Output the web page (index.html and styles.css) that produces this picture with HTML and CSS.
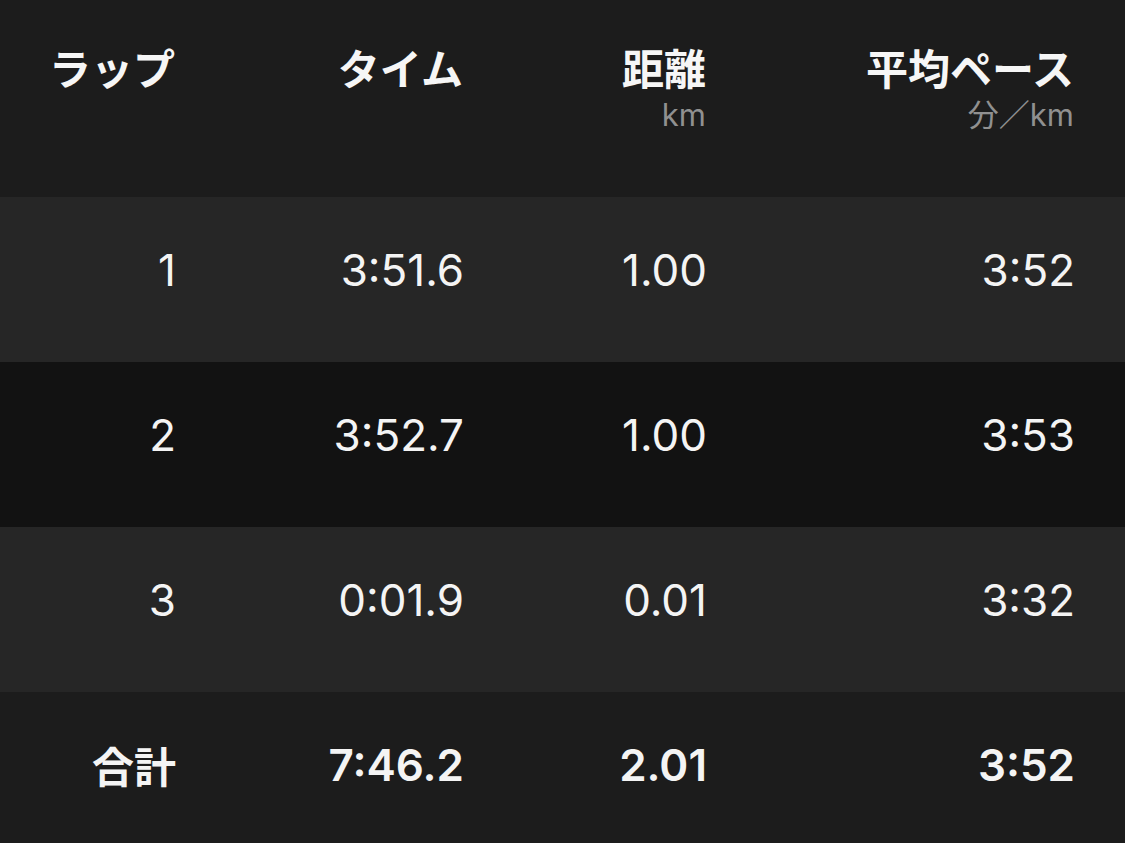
FILE: index.html
```html
<!DOCTYPE html>
<html lang="ja">
<head>
<meta charset="utf-8">
<link rel="stylesheet" href="styles.css">
</head>
<body>
<div class="table">
  <div class="row head">
    <div class="cell"><div class="title">ラップ</div></div>
    <div class="cell"><div class="title">タイム</div></div>
    <div class="cell"><div class="title">距離</div><div class="sub">km</div></div>
    <div class="cell"><div class="title">平均ペース</div><div class="sub">分／km</div></div>
  </div>
  <div class="row data light">
    <div class="cell">1</div>
    <div class="cell">3:51.6</div>
    <div class="cell">1.00</div>
    <div class="cell">3:52</div>
  </div>
  <div class="row data dark">
    <div class="cell">2</div>
    <div class="cell">3:52.7</div>
    <div class="cell">1.00</div>
    <div class="cell">3:53</div>
  </div>
  <div class="row data light">
    <div class="cell">3</div>
    <div class="cell">0:01.9</div>
    <div class="cell">0.01</div>
    <div class="cell">3:32</div>
  </div>
  <div class="row data total">
    <div class="cell jp">合計</div>
    <div class="cell">7:46.2</div>
    <div class="cell">2.01</div>
    <div class="cell">3:52</div>
  </div>
</div>
</body>
</html>
```

FILE: styles.css
```css
html, body {
  margin: 0;
  padding: 0;
  background: #1c1c1c;
  width: 1125px;
  height: 843px;
  overflow: hidden;
}

.table {
  display: flex;
  flex-direction: column;
  color: #f4f4f4;
  font-family: Inter, "Noto Sans CJK JP", sans-serif;
}

.row {
  display: grid;
  grid-template-columns: 176px 288px 243px 368px;
  padding-right: 47px;
  box-sizing: border-box;
  width: 1125px;
}

.cell {
  text-align: right;
  display: flex;
  flex-direction: column;
  align-items: flex-end;
}

.head {
  height: 197px;
  background: #1c1c1c;
  padding-top: 46px;
}

.title {
  font-family: "Noto Sans CJK JP", sans-serif;
  font-weight: 700;
  font-size: 42px;
  line-height: 42px;
  color: #f6f6f6;
  margin-right: 1px;
}

.sub {
  font-family: Inter, "Noto Sans CJK JP", sans-serif;
  font-size: 31px;
  line-height: 31px;
  color: #909090;
  margin-top: 11px;
  margin-right: 1px;
}

.data {
  height: 165px;
  font-size: 44px;
  line-height: 44px;
  padding-top: 51px;
  box-sizing: border-box;
}

.light { background: #262626; }
.dark { background: #121212; }
.total {
  background: #1c1c1c;
  height: 151px;
  font-weight: 600;
}

.jp {
  font-family: "Noto Sans CJK JP", sans-serif;
  font-weight: 700;
  font-size: 42px;
}
```
